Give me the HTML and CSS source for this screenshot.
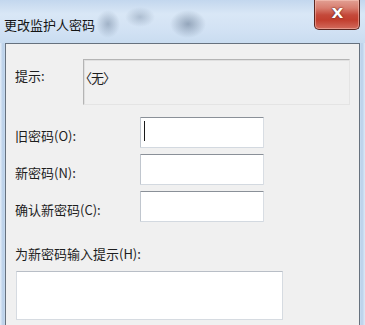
FILE: index.html
```html
<!DOCTYPE html>
<html lang="zh-CN">
<head>
<meta charset="utf-8">
<title>更改监护人密码</title>
<link rel="stylesheet" href="styles.css">
</head>
<body>
<div class="window">
  <div class="titlebar">
    <div class="title">更改监护人密码</div>
    <div class="close"><span>X</span></div>
  </div>
  <div class="panel">
    <div class="hint-row">
      <div class="label hint-label">提示:</div>
      <div class="hint-box"><span class="hint-text">〈无〉</span></div>
    </div>
    <div class="form">
      <div class="label">旧密码(O):</div>
      <div class="field"><span class="caret"></span></div>
      <div class="label">新密码(N):</div>
      <div class="field"></div>
      <div class="label">确认新密码(C):</div>
      <div class="field"></div>
    </div>
    <div class="label new-hint-label">为新密码输入提示(H):</div>
    <div class="textarea"></div>
  </div>
</div>
</body>
</html>
```

FILE: styles.css
```css
html, body {
  margin: 0;
  padding: 0;
  width: 365px;
  height: 325px;
  overflow: hidden;
  font-family: "Noto Sans CJK SC", "Liberation Sans", sans-serif;
}

.window {
  width: 365px;
  height: 325px;
  box-sizing: border-box;
  padding: 0 5px 0 5px;
  display: flex;
  flex-direction: column;
  background: linear-gradient(to right, #e6eff9 0px, #b9cfe8 3px, #c9dcf0 5px, #c9dcf0 360px, #b9d0ea 362px, #dde9f6 365px);
}

.titlebar {
  height: 43px;
  flex: none;
  display: flex;
  justify-content: space-between;
  align-items: flex-start;
  margin: 0 -5px;
  padding: 0 5px 0 4px;
  background:
    radial-gradient(ellipse 12px 14px at 108px 24px, rgba(110,130,155,0.5), rgba(110,130,155,0) 100%),
    radial-gradient(ellipse 15px 10px at 140px 17px, rgba(110,130,155,0.4), rgba(110,130,155,0) 100%),
    radial-gradient(ellipse 18px 14px at 188px 24px, rgba(95,115,140,0.55), rgba(95,115,140,0) 100%),
    linear-gradient(to bottom, #c3d7ee 0px, #d9e7f6 14px, #d2e2f4 30px, #c9dcf0 43px);
}

.title {
  font-size: 13px;
  line-height: 16px;
  margin-top: 17px;
  color: #141414;
}

.close {
  width: 46px;
  height: 30px;
  box-sizing: border-box;
  border: 1px solid #5a2620;
  border-top: none;
  border-radius: 0 0 5px 5px;
  background: linear-gradient(to bottom, #e2a094 0px, #d87e70 8px, #c4493a 15px, #c23f2f 20px, #d47062 30px);
  box-shadow: inset 0 0 0 1px rgba(255,210,200,0.45);
  display: flex;
  justify-content: center;
  align-items: center;
}

.close span {
  font-family: "DejaVu Sans", sans-serif;
  font-weight: bold;
  font-size: 14px;
  line-height: 14px;
  color: #ffffff;
  transform: scaleX(1.1);
  text-shadow: 0 0 1px #5a1a12, 0 0 2px #7a2a20;
  margin-top: -3px;
}

.panel {
  flex: 1;
  background: #f0f0f0;
  border: 1px solid #66717e;
  border-bottom: none;
  padding: 15px 7px 0 9px;
  display: flex;
  flex-direction: column;
}

.label {
  font-size: 13px;
  line-height: 16px;
  color: #1e1e1e;
  white-space: nowrap;
}

.hint-row {
  display: flex;
  align-items: flex-start;
}

.hint-label {
  width: 68px;
  flex: none;
  margin-top: 9px;
}

.hint-box {
  width: 267px;
  height: 46px;
  box-sizing: border-box;
  border: 1px solid #b4b4b4;
  border-right-color: #e4e4e4;
  border-bottom-color: #e4e4e4;
  box-shadow: inset 1px 1px 0 #e0e0e0;
  padding: 4px 0 0 0;
}

.hint-text {
  display: inline-block;
  margin-left: -5px;
  font-size: 13px;
  line-height: 16px;
  color: #1e1e1e;
  letter-spacing: -1px;
}

.form {
  margin-top: 12px;
  display: grid;
  grid-template-columns: 125px 124px;
  row-gap: 6px;
  align-items: center;
}

.form .label {
  margin-top: 6px;
}

.field {
  height: 31px;
  box-sizing: border-box;
  background: #ffffff;
  border: 1px solid #d3d9e0;
  border-top-color: #8a9098;
  border-left-color: #c0c6ce;
  border-right-color: #d8dde3;
  border-radius: 1px;
  padding: 3px 0 0 3px;
}

.caret {
  display: block;
  width: 1px;
  height: 20px;
  background: #1a1a1a;
}

.new-hint-label {
  margin-top: 24px;
}

.textarea {
  margin-top: 9px;
  width: 267px;
  height: 49px;
  box-sizing: border-box;
  margin-left: 1px;
  background: #ffffff;
  border: 1px solid #d6dbe1;
  border-top-color: #b8bec6;
}
```
